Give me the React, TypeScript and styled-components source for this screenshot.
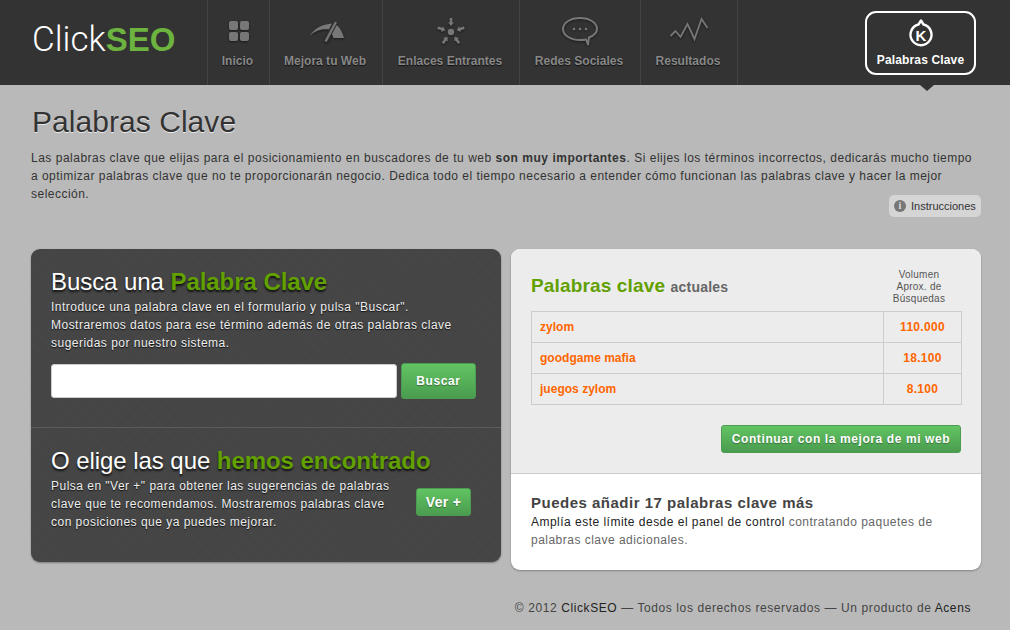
import React from "react";
import styled, { createGlobalStyle } from "styled-components";

const Global = createGlobalStyle`
  html, body { margin: 0; padding: 0; }
  body {
    width: 1010px; height: 630px; overflow: hidden; background: #b9b9b9;
    font-family: "Liberation Sans", Arial, sans-serif; font-size: 12px; color: #333;
    letter-spacing: 0.48px;
  }
  * { box-sizing: border-box; }
`;

const Header = styled.header`
  height: 85px; background: #333; display: flex; align-items: stretch; position: relative;
`;
const Logo = styled.div`
  width: 207px; padding: 22px 0 0 32px; font-family: Roboto, sans-serif; font-size: 35px; line-height: 36px;
  font-weight: 300; color: #fff; letter-spacing: 0; white-space: nowrap;
  b { font-family: "Liberation Sans", sans-serif; font-weight: 700; color: #6cb43f; font-size: 33px; }
`;
const Nav = styled.nav`
  display: flex; border-left: 1px solid #444;
`;
const NavItem = styled.a<{ $w: number }>`
  width: ${(p) => p.$w}px; border-right: 1px solid #444; display: flex; flex-direction: column; align-items: center;
  padding-top: 16px; color: #888; font-weight: 700; font-size: 12px; letter-spacing: 0.02px; text-shadow: 0 1px 1px #111; white-space: nowrap;
  svg { display: block; height: 30px; margin-bottom: 8px; filter: drop-shadow(0 1px 1px #1a1a1a); }
`;
const NavLabel = styled.span`
  margin-right: 2px;
`;
const ActiveWrap = styled.div`
  margin-left: auto; margin-right: 34px; padding-top: 11px; position: relative;
  &::after {
    content: ""; position: absolute; left: 55px; bottom: -6px; border: 7px solid transparent;
    border-top: 6px solid #333; border-bottom: 0;
  }
`;
const ActiveItem = styled.a`
  width: 111px; height: 64px; border: 2px solid #fff; border-radius: 11px; display: flex; flex-direction: column; align-items: center;
  padding-top: 5px; color: #fff; font-weight: 700; font-size: 12px; letter-spacing: 0.15px; white-space: nowrap;
  svg { display: block; margin-bottom: 3px; }
`;

const Main = styled.main`
  padding: 19px 29px 0 30px;
`;
const Title = styled.h1`
  margin: 0 0 9px 2px; font-size: 30px; line-height: 36px; font-weight: 400; color: #333; letter-spacing: 0.05px;
  text-shadow: 0 1px 0 #e8e8e8;
`;
const Intro = styled.div`
  line-height: 18px; color: #333; padding-left: 1px;
`;
const IntroLine = styled.p<{ $w?: number }>`
  margin: 0; white-space: nowrap; width: ${(p) => (p.$w ? `${p.$w}px` : "auto")};
  text-align: ${(p) => (p.$w ? "justify" : "left")}; text-align-last: ${(p) => (p.$w ? "justify" : "left")};
`;
const HelpRow = styled.div`
  display: flex; justify-content: flex-end; margin-top: -8px; height: 22px;
`;
const Help = styled.a`
  display: flex; align-items: center; gap: 5px; height: 22px; padding: 0 4px 0 5px; width: 92px; background: #d5d5d5; border-radius: 5px;
  font-size: 11px; color: #333; letter-spacing: 0; white-space: nowrap;
`;
const InfoDot = styled.span`
  width: 12px; height: 12px; border-radius: 50%; background: #777; color: #ddd; font: 700 10px/12px "Liberation Serif", serif;
  text-align: center; flex: none;
`;
const Columns = styled.div`
  display: grid; grid-template-columns: 470px 470px; gap: 10px; margin: 32px 0 0 1px; align-items: start;
`;
const DarkPanel = styled.section`
  height: 313px; border-radius: 9px; color: #eee; box-shadow: 0 1px 2px rgba(0,0,0,.35);
  background-color: #454545;
  background-image:
    repeating-linear-gradient(45deg, rgba(255,255,255,.012) 0 1px, transparent 1px 2px),
    repeating-linear-gradient(-45deg, rgba(0,0,0,.035) 0 1px, transparent 1px 3px);
`;
const SearchBlock = styled.div`
  height: 179px; padding: 18px 25px 0 20px; border-bottom: 1px solid #5c5c5c;
`;
const FoundBlock = styled.div`
  padding: 18px 30px 0 20px;
`;
const DarkTitle = styled.h2`
  margin: 0 0 1px; font-size: 24px; line-height: 30px; font-weight: 400; color: #fff; text-shadow: 0 2px 2px #111; letter-spacing: -0.06px; white-space: nowrap;
  b { font-weight: 700; color: #62a000; }
`;
const DarkText = styled.p`
  margin: 0; line-height: 18px; color: #eee; text-shadow: 0 1px 1px #111; white-space: nowrap;
`;
const SearchRow = styled.div`
  display: flex; gap: 4px; align-items: center; margin-top: 11px;
`;
const Field = styled.input`
  width: 346px; height: 34px; border: 1px solid #ccc; border-radius: 3px; background: #fff; padding: 0 8px; outline: none;
`;
const GreenButton = styled.button<{ $w: number; $h: number }>`
  width: ${(p) => p.$w}px; height: ${(p) => p.$h}px; padding: 0; flex: none; border: 1px solid #4b9c50; border-radius: 3px;
  background: linear-gradient(#62c462, #4a9c4f); color: #fff; font-family: "Liberation Sans", sans-serif; font-size: 12px; font-weight: 700;
  letter-spacing: 0.6px; text-shadow: 0 1px 1px rgba(0,0,0,.35); white-space: nowrap;
`;
const ViewButton = styled(GreenButton)`
  margin-bottom: 4px; font-size: 14px; letter-spacing: 0.3px;
`;
const FoundRow = styled.div`
  display: flex; justify-content: space-between; align-items: center; margin-top: 1px;
`;
const LightPanel = styled.section`
  height: 321px; border-radius: 9px; background: #fff; box-shadow: 0 1px 2px rgba(0,0,0,.3); overflow: hidden;
`;
const CurrentBlock = styled.div`
  height: 225px; background: #ececec; border-bottom: 1px solid #ccc; padding: 19px 20px 0;
`;
const TableHead = styled.div`
  display: flex; justify-content: space-between; align-items: flex-end; height: 43px;
`;
const PanelTitle = styled.h2`
  margin: 0 0 9px; font-size: 19px; line-height: 30px; font-weight: 700; color: #62a000; letter-spacing: 0.15px;
  span { font-size: 14px; color: #666; letter-spacing: 0.2px; }
`;
const VolumeHead = styled.div`
  width: 78px; text-align: center; font-size: 10px; line-height: 12px; color: #555; letter-spacing: 0.25px; margin: 0 3px 6px 0;
`;
const KeywordTable = styled.table`
  width: 431px; border-collapse: collapse; margin-top: 0;
  td { border: 1px solid #ccc; height: 31px; color: #f60; font-weight: 700; font-size: 12px; letter-spacing: 0.02px; padding: 0; }
  td:first-child { padding-left: 8px; }
  td:last-child { width: 78px; text-align: center; letter-spacing: 0.3px; }
`;
const ContinueRow = styled.div`
  display: flex; justify-content: flex-end; margin-top: 20px;
`;
const MoreBlock = styled.div`
  padding: 19px 20px 0;
  h3 { margin: 0; font-size: 15px; line-height: 20px; font-weight: 700; color: #444; letter-spacing: 0.5px; }
  p { margin: 0; line-height: 18px; color: #666; }
  em { font-style: normal; color: #222; }
`;
const Footer = styled.footer`
  text-align: right; padding: 31px 10px 0 0; font-size: 12px; color: #444; line-height: 14px; letter-spacing: 0.59px; white-space: nowrap;
  em { font-style: normal; color: #222; }
`;

const iconColor = "#777";

const GridIcon = () => (
  <svg width="20" height="30" viewBox="0 0 20 30">
    {[[0, 5], [11, 5], [0, 16], [11, 16]].map(([x, y]) => (
      <rect key={`${x}-${y}`} x={x} y={y} width="9" height="9" rx="2" fill={iconColor} />
    ))}
  </svg>
);
const GaugeIcon = () => (
  <svg width="36" height="30" viewBox="0 0 36 30">
    <path d="M1.5 20C6 13 14 8 24 7.5L21 13.5C13 12.5 7 15 1.5 20Z" fill={iconColor} />
    <path d="M27 8C31 10 34 15 36 22L25.5 22L23.5 17Z" fill={iconColor} />
    <path d="M17.5 25.5L28 6" stroke="#333" strokeWidth="4.5" fill="none" />
    <path d="M17.5 25.5L28 6" stroke={iconColor} strokeWidth="2.2" fill="none" />
  </svg>
);
const LinksIcon = () => (
  <svg width="30" height="30" viewBox="-15 -15 30 30">
    <circle cx="0" cy="1" r="3.2" fill={iconColor} />
    {[0, 72, -72, 144, -144].map((a) => (
      <path key={a} transform={`translate(0 1) rotate(${a})`} d="M-1.3 -14H1.3V-9.5H3L0 -6L-3 -9.5H-1.3Z" fill={iconColor} />
    ))}
  </svg>
);
const SpeechIcon = () => (
  <svg width="38" height="30" viewBox="0 0 38 30">
    <path d="M19 2C9 2 2 7 2 13C2 19 9 24 19 24C21 24 23 24 25 23.5L27 28.5L28 21.5C33 19.5 36 16.5 36 13C36 7 29 2 19 2Z" fill="none" stroke={iconColor} strokeWidth="2" strokeLinejoin="round" />
    <circle cx="13" cy="13" r="1.3" fill={iconColor} /><circle cx="19" cy="13" r="1.3" fill={iconColor} /><circle cx="25" cy="13" r="1.3" fill={iconColor} />
  </svg>
);
const ChartIcon = () => (
  <svg width="40" height="30" viewBox="0 0 40 30">
    <polyline points="1.5,20 6.5,15 11.5,21 18.5,8 25.5,23 32.5,3 38.5,12" fill="none" stroke={iconColor} strokeWidth="1.8" />
  </svg>
);
const KeyIcon = () => (
  <svg width="28" height="32" viewBox="0 0 28 32">
    <path d="M14 2.5L16.5 6.5A10.5 10.5 0 1 1 11.5 6.5Z" fill="none" stroke="#fff" strokeWidth="2.4" strokeLinejoin="round" />
    <text x="14" y="22.5" textAnchor="middle" fontFamily="Liberation Sans, sans-serif" fontSize="15" fill="#fff" letterSpacing="0">K</text>
  </svg>
);

const navItems = [
  { label: "Inicio", w: 62, icon: <GridIcon /> },
  { label: "Mejora tu Web", w: 113, icon: <GaugeIcon /> },
  { label: "Enlaces Entrantes", w: 137, icon: <LinksIcon /> },
  { label: "Redes Sociales", w: 121, icon: <SpeechIcon /> },
  { label: "Resultados", w: 97, icon: <ChartIcon /> },
];
const rows = [["zylom", "110.000"], ["goodgame mafia", "18.100"], ["juegos zylom", "8.100"]];

export default function App() {
  return (
    <>
      <Global />
      <Header>
        <Logo>Click<b>SEO</b></Logo>
        <Nav>
          {navItems.map((n) => (
            <NavItem key={n.label} $w={n.w}>{n.icon}<NavLabel>{n.label}</NavLabel></NavItem>
          ))}
        </Nav>
        <ActiveWrap>
          <ActiveItem><KeyIcon />Palabras Clave</ActiveItem>
        </ActiveWrap>
      </Header>
      <Main>
        <Title>Palabras Clave</Title>
        <Intro>
          <IntroLine $w={941}>Las palabras clave que elijas para el posicionamiento en buscadores de tu web <b>son muy importantes</b>. Si elijes los términos incorrectos, dedicarás mucho tiempo</IntroLine>
          <IntroLine $w={911}>a optimizar palabras clave que no te proporcionarán negocio. Dedica todo el tiempo necesario a entender cómo funcionan las palabras clave y hacer la mejor</IntroLine>
          <IntroLine>selección.</IntroLine>
        </Intro>
        <HelpRow>
          <Help><InfoDot>i</InfoDot>Instrucciones</Help>
        </HelpRow>
        <Columns>
          <DarkPanel>
            <SearchBlock>
              <DarkTitle>Busca una <b>Palabra Clave</b></DarkTitle>
              <DarkText>
                Introduce una palabra clave en el formulario y pulsa "Buscar".<br />
                Mostraremos datos para ese término además de otras palabras clave<br />
                sugeridas por nuestro sistema.
              </DarkText>
              <SearchRow>
                <Field />
                <GreenButton $w={75} $h={36}>Buscar</GreenButton>
              </SearchRow>
            </SearchBlock>
            <FoundBlock>
              <DarkTitle>O elige las que <b>hemos encontrado</b></DarkTitle>
              <FoundRow>
                <DarkText>
                  Pulsa en "Ver +" para obtener las sugerencias de palabras<br />
                  clave que te recomendamos. Mostraremos palabras clave<br />
                  con posiciones que ya puedes mejorar.
                </DarkText>
                <ViewButton $w={55} $h={28}>Ver +</ViewButton>
              </FoundRow>
            </FoundBlock>
          </DarkPanel>
          <LightPanel>
            <CurrentBlock>
              <TableHead>
                <PanelTitle>Palabras clave <span>actuales</span></PanelTitle>
                <VolumeHead>Volumen<br />Aprox. de<br />Búsquedas</VolumeHead>
              </TableHead>
              <KeywordTable>
                <tbody>
                  {rows.map(([k, v]) => (
                    <tr key={k}><td>{k}</td><td>{v}</td></tr>
                  ))}
                </tbody>
              </KeywordTable>
              <ContinueRow>
                <GreenButton $w={240} $h={28}>Continuar con la mejora de mi web</GreenButton>
              </ContinueRow>
            </CurrentBlock>
            <MoreBlock>
              <h3>Puedes añadir 17 palabras clave más</h3>
              <p><em>Amplía este límite desde el panel de control</em> contratando paquetes de<br />palabras clave adicionales.</p>
            </MoreBlock>
          </LightPanel>
        </Columns>
        <Footer>© 2012 <em>ClickSEO</em> — Todos los derechos reservados — Un producto de <em>Acens</em></Footer>
      </Main>
    </>
  );
}
